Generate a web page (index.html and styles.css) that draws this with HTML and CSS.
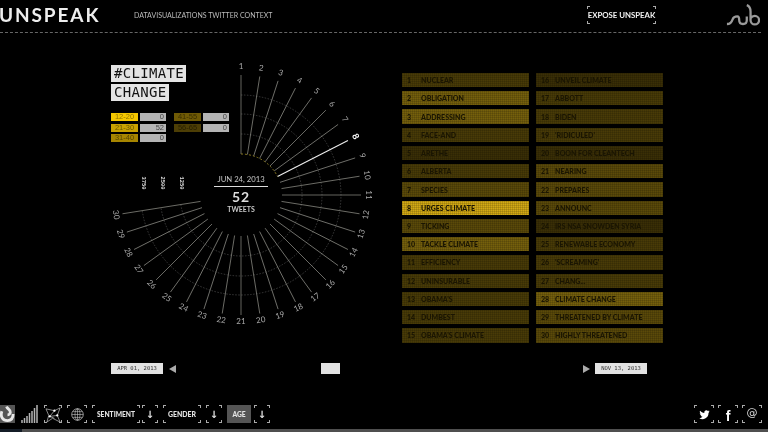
FILE: index.html
```html
<!DOCTYPE html>
<html lang="en">
<head>
<meta charset="utf-8">
<title>Unspeak</title>
<link rel="stylesheet" href="styles.css">
</head>
<body>
<div class="page">
  <header class="top">
    <div class="brand">UNSPEAK</div>
    <div class="tagline">DATAVISUALIZATIONS TWITTER CONTEXT</div>
    <a class="expose bracket">EXPOSE UNSPEAK</a>
    <svg class="sub-logo" viewBox="0 0 36 24" width="34" height="23"><path d="M1 21c4 0 5-2 6-5s3-3 5-3 2 3 2 4c0 3 2 4 4 4s4-1 4-4v-4" fill="none" stroke="#9a9a9a" stroke-width="2.400"/><path d="M22 1c3 1 4 4 4 7v9a4.500 4.500 0 1 0 4.500-4.500c-2 0-3.500 1-4.500 2.500" fill="none" stroke="#9a9a9a" stroke-width="2.400"/></svg>
  </header>

  <main class="content">
    <section class="left">
      <h1 class="title"><span>#CLIMATE</span><span>CHANGE</span></h1>
      <div class="ages">
        <div class="age-col">
          <div class="age"><b class="a1">12-20</b><i>0</i></div>
          <div class="age"><b class="a2">21-30</b><i>52</i></div>
          <div class="age"><b class="a3">31-40</b><i>0</i></div>
        </div>
        <div class="age-col">
          <div class="age"><b class="a4">41-55</b><i>0</i></div>
          <div class="age"><b class="a5">56-65</b><i>0</i></div>
        </div>
      </div>
    </section>
    <svg class="radial" viewBox="0 0 300 300" width="300" height="300">
      <g transform="translate(150 150)">
        <g class="rings">
          <path d="M0-100A100 100 0 1 1-98.8 15.6"/>
          <path d="M0-81A81 81 0 1 1-80 12.7"/>
          <path d="M0-61A61 61 0 1 1-60.2 9.5"/>
        </g>
        <g class="spokes">
          <line y1="-41" y2="-120"/>
          <line y1="-41" y2="-120" transform="rotate(9)"/>
          <line y1="-41" y2="-120" transform="rotate(18)"/>
          <line y1="-41" y2="-120" transform="rotate(27)"/>
          <line y1="-41" y2="-120" transform="rotate(36)"/>
          <line y1="-41" y2="-120" transform="rotate(45)"/>
          <line y1="-41" y2="-120" transform="rotate(54)"/>
          <line class="on" y1="-41" y2="-120" transform="rotate(63)"/>
          <line y1="-41" y2="-120" transform="rotate(72)"/>
          <line y1="-41" y2="-120" transform="rotate(81)"/>
          <line y1="-41" y2="-120" transform="rotate(90)"/>
          <line y1="-41" y2="-120" transform="rotate(99)"/>
          <line y1="-41" y2="-120" transform="rotate(108)"/>
          <line y1="-41" y2="-120" transform="rotate(117)"/>
          <line y1="-41" y2="-120" transform="rotate(126)"/>
          <line y1="-41" y2="-120" transform="rotate(135)"/>
          <line y1="-41" y2="-120" transform="rotate(144)"/>
          <line y1="-41" y2="-120" transform="rotate(153)"/>
          <line y1="-41" y2="-120" transform="rotate(162)"/>
          <line y1="-41" y2="-120" transform="rotate(171)"/>
          <line y1="-41" y2="-120" transform="rotate(180)"/>
          <line y1="-41" y2="-120" transform="rotate(189)"/>
          <line y1="-41" y2="-120" transform="rotate(198)"/>
          <line y1="-41" y2="-120" transform="rotate(207)"/>
          <line y1="-41" y2="-120" transform="rotate(216)"/>
          <line y1="-41" y2="-120" transform="rotate(225)"/>
          <line y1="-41" y2="-120" transform="rotate(234)"/>
          <line y1="-41" y2="-120" transform="rotate(243)"/>
          <line y1="-41" y2="-120" transform="rotate(252)"/>
          <line y1="-41" y2="-120" transform="rotate(261)"/>
        </g>
        <path class="ticks" d="M0-41A41 41 0 0 1 36.500-18.600"/>
        <g class="nums">
          <text transform="translate(0 -128)">1</text>
          <text transform="rotate(9) translate(0 -128)">2</text>
          <text transform="rotate(18) translate(0 -128)">3</text>
          <text transform="rotate(27) translate(0 -128)">4</text>
          <text transform="rotate(36) translate(0 -128)">5</text>
          <text transform="rotate(45) translate(0 -128)">6</text>
          <text transform="rotate(54) translate(0 -128)">7</text>
          <text class="on" transform="rotate(63) translate(0 -128)">8</text>
          <text transform="rotate(72) translate(0 -127)">9</text>
          <text transform="rotate(81) translate(0 -127)">10</text>
          <text transform="rotate(90) translate(0 -127)">11</text>
          <text transform="rotate(-81) translate(0 127)">12</text>
          <text transform="rotate(-72) translate(0 127)">13</text>
          <text transform="rotate(-63) translate(0 127)">14</text>
          <text transform="rotate(-54) translate(0 127)">15</text>
          <text transform="rotate(-45) translate(0 127)">16</text>
          <text transform="rotate(-36) translate(0 127)">17</text>
          <text transform="rotate(-27) translate(0 127)">18</text>
          <text transform="rotate(-18) translate(0 127)">19</text>
          <text transform="rotate(-9) translate(0 127)">20</text>
          <text transform="translate(0 127)">21</text>
          <text transform="rotate(9) translate(0 127)">22</text>
          <text transform="rotate(18) translate(0 127)">23</text>
          <text transform="rotate(27) translate(0 127)">24</text>
          <text transform="rotate(36) translate(0 127)">25</text>
          <text transform="rotate(45) translate(0 127)">26</text>
          <text transform="rotate(54) translate(0 127)">27</text>
          <text transform="rotate(63) translate(0 127)">28</text>
          <text transform="rotate(72) translate(0 127)">29</text>
          <text transform="rotate(81) translate(0 127)">30</text>
        </g>
        <g class="scale">
          <text transform="translate(-98 -5.500) rotate(90)">3750</text>
          <text transform="translate(-79 -5.500) rotate(90)">2500</text>
          <text transform="translate(-60 -5.500) rotate(90)">1250</text>
        </g>
        <text class="c-date" y="-13.500">JUN 24, 2013</text>
        <line class="c-rule" x1="-27" x2="27" y1="-8.500" y2="-8.500"/>
        <text class="c-num" y="7">52</text>
        <text class="c-lbl" y="17">TWEETS</text>
      </g>
    </svg>
    <ol class="words">
      <li class="w2"><span>1</span>NUCLEAR</li>
      <li class="w4"><span>2</span>OBLIGATION</li>
      <li class="w4"><span>3</span>ADDRESSING</li>
      <li class="w2"><span>4</span>FACE-AND</li>
      <li class="w1"><span>5</span>ARETHE</li>
      <li class="w2"><span>6</span>ALBERTA</li>
      <li class="w3"><span>7</span>SPECIES</li>
      <li class="w5"><span>8</span>URGES CLIMATE</li>
      <li class="w3"><span>9</span>TICKING</li>
      <li class="w4"><span>10</span>TACKLE CLIMATE</li>
      <li class="w2"><span>11</span>EFFICIENCY</li>
      <li class="w2"><span>12</span>UNINSURABLE</li>
      <li class="w2"><span>13</span>OBAMA'S</li>
      <li class="w2"><span>14</span>DUMBEST</li>
      <li class="w2"><span>15</span>OBAMA'S CLIMATE</li>
      <li class="w1"><span>16</span>UNVEIL CLIMATE</li>
      <li class="w2"><span>17</span>ABBOTT</li>
      <li class="w2"><span>18</span>BIDEN</li>
      <li class="w2"><span>19</span>'RIDICULED'</li>
      <li class="w1"><span>20</span>BOON FOR CLEANTECH</li>
      <li class="w3"><span>21</span>NEARING</li>
      <li class="w3"><span>22</span>PREPARES</li>
      <li class="w3"><span>23</span>ANNOUNC</li>
      <li class="w1"><span>24</span>IRS NSA SNOWDEN SYRIA</li>
      <li class="w2"><span>25</span>RENEWABLE ECONOMY</li>
      <li class="w2"><span>26</span>'SCREAMING'</li>
      <li class="w2"><span>27</span>CHANG...</li>
      <li class="w4"><span>28</span>CLIMATE CHANGE</li>
      <li class="w3"><span>29</span>THREATENED BY CLIMATE</li>
      <li class="w3"><span>30</span>HIGHLY THREATENED</li>
    </ol>
  </main>

  <div class="timeline">
    <div class="date">APR 01, 2013</div>
    <div class="tri-l"></div>
    <div class="handle"></div>
    <div class="tri-r"></div>
    <div class="date">NOV 13, 2013</div>
  </div>

  <nav class="tools">
    <a class="tool spiral"><svg viewBox="0 0 16 18" width="16" height="18"><path d="M7 1c1 3 4 3 4 6 0 2-2 3-3 3M2 6c-2 6 1 10 6 10 4 0 6-3 6-7" fill="none" stroke="#e8e8e8" stroke-width="3"/></svg></a>
    <a class="tool bars"><svg viewBox="0 0 18 18" width="18" height="18"><path d="M1 18v-3M3.500 18v-5M6 18v-7M8.500 18V8M11 18V6M13.500 18V3M16 18V0" stroke="#b4b4b4" stroke-width="1.500"/></svg></a>
    <a class="tool net bracket"><svg viewBox="0 0 18 18" width="17" height="17"><path d="M1 3l9 2 6-3-3 8 3 7-8-4-6 4 2-7zM10 5l-5 6 8-1M5 11l5 2" fill="none" stroke="#ccc" stroke-width=".7"/><circle cx="10" cy="5" r="1.200" fill="#fff"/><circle cx="5" cy="11" r="1.200" fill="#fff"/><circle cx="13" cy="10" r="1.200" fill="#fff"/></svg></a>
    <a class="tool globe bracket"><svg viewBox="0 0 18 18" width="13" height="13"><circle cx="9" cy="9" r="8" fill="none" stroke="#ccc"/><ellipse cx="9" cy="9" rx="3.500" ry="8" fill="none" stroke="#ccc" stroke-width=".8"/><path d="M1 9h16M2.500 5h13M2.500 13h13M9 1v16" stroke="#ccc" stroke-width=".8"/></svg></a>
    <a class="tool txt bracket sent">SENTIMENT</a>
    <a class="tool arrow bracket a-near">↓</a>
    <a class="tool txt bracket gend">GENDER</a>
    <a class="tool arrow bracket">↓</a>
    <a class="tool txt active">AGE</a>
    <a class="tool arrow bracket a-age">↓</a>
    <div class="social">
      <a class="tool soc bracket"><svg viewBox="0 0 24 24" width="11" height="11"><path fill="#fff" d="M23 5c-.8.400-1.700.6-2.600.7 1-.6 1.600-1.500 2-2.500-.9.500-1.900.9-2.900 1.100a4.600 4.600 0 0 0-7.800 4.200C7.900 8.300 4.500 6.500 2.300 3.700c-1.200 2-.6 4.700 1.400 6.100-.7 0-1.400-.2-2-.6 0 2.200 1.500 4.200 3.700 4.600-.7.200-1.400.2-2.100.1.600 1.900 2.300 3.200 4.300 3.200A9.300 9.300 0 0 1 .7 20a13 13 0 0 0 20-11.500c.9-.7 1.700-1.500 2.300-3.500z"/></svg></a>
      <a class="tool soc bracket fb">f</a>
      <a class="tool soc bracket at">@</a>
    </div>
  </nav>
  <div class="strip"></div>
</div>
</body>
</html>
```
FILE: styles.css
```css
* { box-sizing: border-box; margin: 0; padding: 0; }
html, body { width: 768px; height: 432px; overflow: hidden; background: #000; }
.page { width: 768px; height: 432px; display: flex; flex-direction: column; font-family: "Lato", "Liberation Sans", sans-serif; color: #ddd; filter: blur(.35px); }

.top { height: 33px; flex: none; display: flex; align-items: center; border-bottom: 1px dashed #666; margin-right: 7px; padding: 0 1px 2px 0; }
.brand { width: 135px; margin-left: -1px; font-size: 19px; font-weight: 700; letter-spacing: 1.900px; color: #eee; line-height: 28px; }
.tagline { font-size: 7px; color: #bbb; white-space: nowrap; }
.expose { margin-left: auto; width: 69px; height: 18px; font-size: 7.800px; font-weight: 700; color: #f2f2f2; display: flex; align-items: center; justify-content: center; white-space: nowrap; }
.sub-logo { margin-left: 70px; flex: none; }

.bracket { background:
  linear-gradient(#aaa,#aaa) 0 0/3px 1px, linear-gradient(#aaa,#aaa) 0 0/1px 3px,
  linear-gradient(#aaa,#aaa) 100% 0/3px 1px, linear-gradient(#aaa,#aaa) 100% 0/1px 3px,
  linear-gradient(#aaa,#aaa) 0 100%/3px 1px, linear-gradient(#aaa,#aaa) 0 100%/1px 3px,
  linear-gradient(#aaa,#aaa) 100% 100%/3px 1px, linear-gradient(#aaa,#aaa) 100% 100%/1px 3px;
  background-repeat: no-repeat; }

.content { height: 330px; flex: none; position: relative; display: flex; padding: 32px 0 0 111px; }
.left { width: 291px; flex: none; }
.title { display: flex; flex-direction: column; align-items: flex-start; gap: 2px; font: 400 14px/17px "DejaVu Sans Mono", monospace; letter-spacing: .32px; color: #111; }
.title span { background: #e4e4e4; padding: 0 2px 0 3px; }
.ages { display: flex; gap: 8px; margin-top: 12px; }
.age-col { display: flex; flex-direction: column; gap: 2.600px; }
.age { display: flex; gap: 2px; height: 8px; font: 400 7.500px/8px "Liberation Sans", sans-serif; }
.age b { width: 27px; font-weight: 400; text-align: center; }
.age i { width: 26px; font-style: normal; text-align: right; padding-right: 2px; background: #b4b4b4; color: #444; }
.a1 { background: #f5c800; color: #8f7200; }
.a2 { background: #c9a200; color: #6b5600; }
.a3 { background: #a68500; color: #574600; }
.a4 { background: #6f5a05; color: #382d00; }
.a5 { background: #4d3e05; color: #261e00; }

.radial { position: absolute; left: 90.500px; top: 12px; }
.rings path { fill: none; stroke: #484848; stroke-width: .8; stroke-dasharray: 1.500 1.500; }
.spokes line { stroke: #8f8f88; stroke-width: .7; }
.spokes line.on { stroke: #eee; stroke-width: 1.100; }
.ticks { fill: none; stroke: #8a7a20; stroke-width: 1; stroke-dasharray: 2 2; }
.nums text { font: 400 8px "Lato", sans-serif; fill: #aaa; text-anchor: middle; dominant-baseline: middle; }
.nums text.on { fill: #fff; font-weight: 700; font-size: 9px; }
.scale text { font: 700 5.400px "Liberation Mono", monospace; fill: #ddd; text-anchor: end; dominant-baseline: middle; }
.c-date { font: 400 7.700px "Lato", sans-serif; fill: #c8c8c8; text-anchor: middle; }
.c-rule { stroke: #ddd; stroke-width: 1; }
.c-num { font: 700 14px "Lato", sans-serif; letter-spacing: 1px; fill: #ddd; text-anchor: middle; }
.c-lbl { font: 700 7px "Lato", sans-serif; fill: #c8c8c8; text-anchor: middle; }

.words { position: absolute; left: 402px; top: 40px; width: 261px; height: 269.500px; display: grid; grid-template-rows: repeat(15, 1fr); grid-template-columns: 127px 127px; grid-auto-flow: column; column-gap: 7px; row-gap: 4px; list-style: none; }
.words li { display: flex; align-items: center; font: 900 7px "Lato", sans-serif; color: #1a1502; white-space: nowrap; background-image: linear-gradient(rgba(0,0,0,.12) 1px, transparent 1px), linear-gradient(90deg, rgba(0,0,0,.12) 1px, transparent 1px); background-size: 2px 2px; }
.words span { width: 19px; padding-left: 5px; flex: none; }
.w1 { background-color: #3a2f06; }
.w2 { background-color: #493b07; }
.w3 { background-color: #5b4a09; }
.w4 { background-color: #75600c; }
.w5 { background-color: #d2a915; color: #110e00; }

.timeline { position: relative; height: 11px; flex: none; display: flex; align-items: center; padding-left: 111px; }
.date { width: 52px; height: 11px; background: #e2e2e2; color: #333; font: 400 5.500px/11px "DejaVu Sans Mono", monospace; text-align: center; }
.tri-l { margin-left: 6px; border-style: solid; border-width: 4.500px 7px 4.500px 0; border-color: transparent #aaa transparent transparent; }
.handle { width: 19px; height: 11px; background: #e2e2e2; margin-left: 145px; }
.tri-r { margin-left: 243px; margin-right: 5px; border-style: solid; border-width: 4.500px 0 4.500px 7px; border-color: transparent transparent transparent #aaa; }

.tools { margin-top: 31px; height: 18px; flex: none; display: flex; align-items: stretch; gap: 5px; }
.tool { height: 18px; display: flex; align-items: center; justify-content: center; color: #e4e4e4; font-size: 6.700px; font-weight: 900; }
.spiral { width: 15px; background: #555; overflow: hidden; }
.bars { width: 18px; margin-left: 1px; }
.net { width: 18px; }
.globe { width: 20px; }
.sent { width: 48px; }
.gend { width: 38px; font-size: 6.900px; }
.arrow { width: 16px; font-size: 10px; font-weight: 700; font-family: "DejaVu Sans", sans-serif; }
.a-near { margin-left: -3px; }
.a-age { margin-left: -2px; }
.active { width: 24px; background: #555; }
.social { margin-left: auto; margin-right: 6px; display: flex; gap: 4px; }
.soc { width: 20px; }
.fb { font: 700 14px/18px "Liberation Sans", sans-serif; color: #fff; padding-top: 3px; }
.at { font: 400 11px/18px "DejaVu Sans", sans-serif; color: #ddd; padding-bottom: 2px; }

.strip { margin-top: 6px; height: 3px; flex: none; background: linear-gradient(90deg, #141c26 22px, #4f4f4f 22px); }
```
